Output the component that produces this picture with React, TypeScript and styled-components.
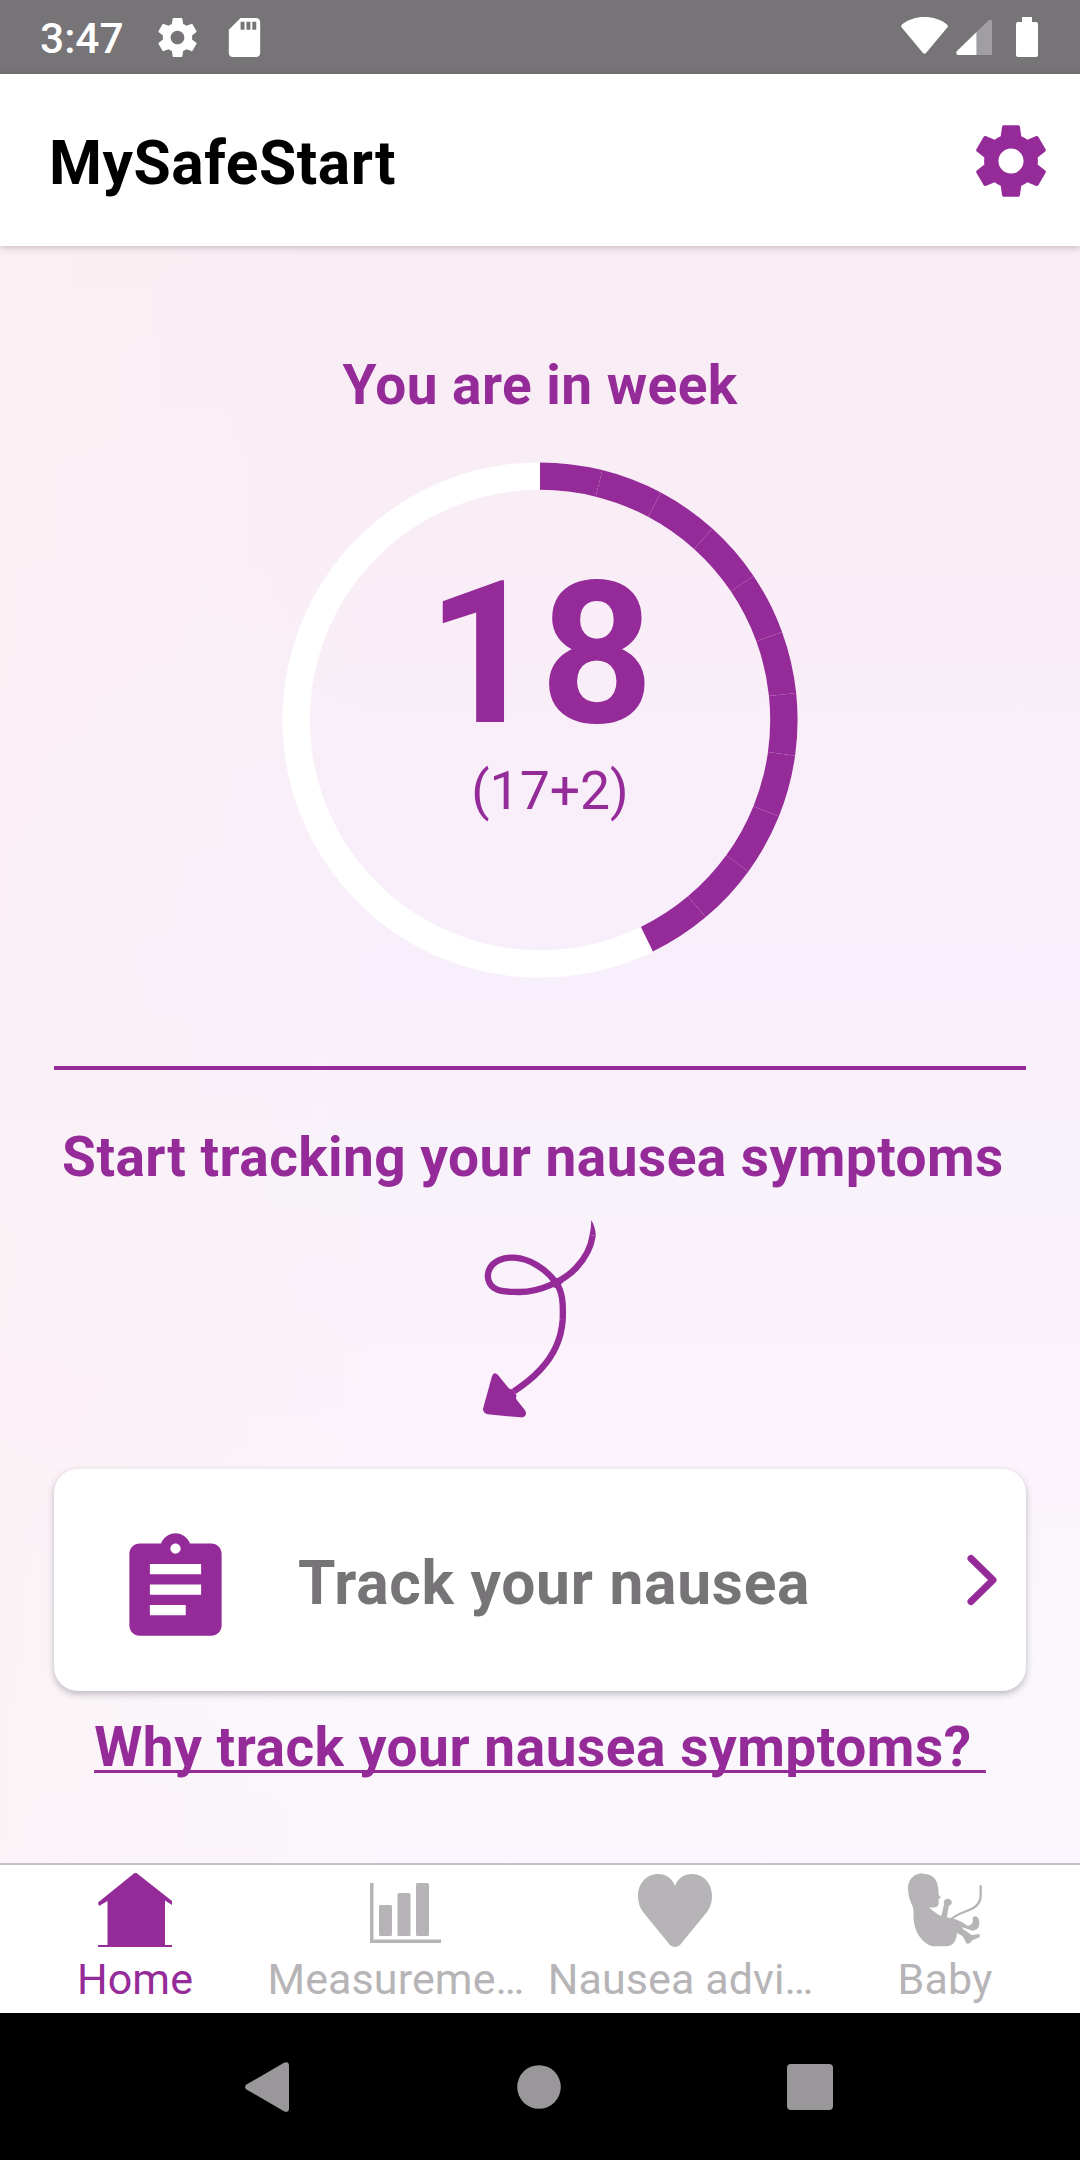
import React from "react";
import styled, { createGlobalStyle } from "styled-components";

const purple = "#952b98";
const grey = "#b6b4b7";

const GlobalStyle = createGlobalStyle`
  * { box-sizing: border-box; }
  body { margin: 0; font-family: Roboto, "Liberation Sans", sans-serif; }
  svg { display: block; flex: none; }
`;

const Screen = styled.div`
  width: 1080px;
  height: 2160px;
  display: flex;
  flex-direction: column;
  overflow: hidden;
  background: #fff;
`;

const StatusBar = styled.header`
  height: 74px;
  flex: none;
  display: flex;
  align-items: flex-start;
  justify-content: space-between;
  padding: 0 42px 0 40px;
  background: #777478;
  color: #fff;
`;

const StatusGroup = styled.div`
  display: flex;
  align-items: flex-start;
`;

const Clock = styled.span`
  width: 114px;
  font-size: 42.5px;
  line-height: 50px;
  padding-top: 14px;
  font-weight: 500;
  white-space: nowrap;
`;

const StatusIcon = styled.svg<{ $top: number; $left: number }>`
  margin-top: ${(p) => p.$top}px;
  margin-left: ${(p) => p.$left}px;
`;

const AppBar = styled.div`
  height: 172px;
  flex: none;
  display: flex;
  align-items: center;
  justify-content: space-between;
  padding: 2px 26px 0 49px;
  background: #fff;
  box-shadow: 0 1px 7px rgba(60, 40, 60, 0.3);
  z-index: 1;
`;

const Title = styled.h1`
  margin: 0;
  padding-top: 5px;
  font-size: 60.5px;
  line-height: 72px;
  font-weight: 700;
  letter-spacing: 0.55px;
  color: #000;
`;

const Content = styled.main`
  flex: 1;
  min-height: 0;
  display: flex;
  flex-direction: column;
  align-items: center;
  padding: 107px 54px 0;
  background:
    linear-gradient(90deg, rgba(251, 241, 243, 0.6) 0%, rgba(251, 241, 243, 0) 35%),
    linear-gradient(180deg, #f8edf3 0%, #f9eef7 22%, #f8effc 45%, #f8f2fa 57%, #fcf2fc 72%, #faf8fc 88%, #fbf6fd 100%);
`;

const Heading = styled.h2<{ $gap?: number }>`
  margin: ${(p) => p.$gap ?? 0}px 0 0;
  font-size: 55px;
  line-height: 64px;
  font-weight: 700;
  letter-spacing: 0.45px;
  color: ${purple};
  white-space: pre;
`;

const Ring = styled.section`
  width: 516px;
  height: 516px;
  margin-top: 45px;
  display: grid;
  flex: none;
  > * { grid-area: 1 / 1; }
`;

const RingLabel = styled.div`
  display: flex;
  flex-direction: column;
  align-items: center;
  padding-top: 92px;
  color: ${purple};
`;

const WeekNumber = styled.strong`
  font-size: 198px;
  line-height: 200px;
  font-weight: 700;
`;

const WeekDetail = styled.span`
  margin: 5px 0 0 20px;
  font-size: 53.5px;
  line-height: 64px;
`;

const Divider = styled.hr`
  width: 100%;
  height: 4px;
  flex: none;
  margin: 88px 0 0;
  border: 0;
  background: ${purple};
`;

const Squiggle = styled.svg`
  margin-top: 27px;
`;

const TrackCard = styled.button`
  width: 972px;
  height: 222px;
  flex: none;
  margin-top: 46px;
  padding: 0 29px 0 60px;
  display: flex;
  align-items: center;
  border: 0;
  border-radius: 24px;
  background: #fff;
  box-shadow: 0 3px 7px rgba(50, 40, 60, 0.3);
  font-family: inherit;
`;

const ClipboardIcon = styled.svg`
  margin-top: 18px;
`;

const CardText = styled.span`
  flex: 1;
  margin-left: 61px;
  padding-top: 7px;
  text-align: left;
  font-size: 60.5px;
  line-height: 72px;
  font-weight: 700;
  letter-spacing: 0.75px;
  color: #777478;
  white-space: nowrap;
`;

const WhyLink = styled.a`
  margin-top: 24px;
  font-size: 55px;
  line-height: 64px;
  font-weight: 700;
  letter-spacing: 0.53px;
  color: ${purple};
  white-space: pre;
  text-decoration: underline;
  text-decoration-skip-ink: none;
  text-decoration-thickness: 3px;
  text-underline-offset: 4px;
`;

const TabBar = styled.nav`
  height: 150px;
  flex: none;
  display: grid;
  grid-template-columns: repeat(4, 270px);
  border-top: 2px solid #c4c1c6;
  background: #fff;
`;

const Tab = styled.div<{ $active?: boolean }>`
  display: flex;
  flex-direction: column;
  align-items: center;
  padding-top: 8px;
  color: ${(p) => (p.$active ? purple : grey)};
`;

const TabLabel = styled.span<{ $shift?: number }>`
  margin-top: 7px;
  margin-left: ${(p) => p.$shift ?? 0}px;
  font-size: 43px;
  line-height: 50px;
  letter-spacing: 0.1px;
  white-space: nowrap;
`;

const SystemBar = styled.footer`
  height: 147px;
  flex: none;
  display: flex;
  align-items: center;
  justify-content: space-between;
  padding: 0 247px 0 245px;
  background: #000;
`;

const HomeButton = styled.svg`
  margin-left: 2px;
`;

const GEAR =
  "M19.43 12.98c.04-.32.07-.64.07-.98s-.03-.66-.07-.98l2.11-1.65c.19-.15.24-.42.12-.64l-2-3.46c-.12-.22-.39-.3-.61-.22l-2.49 1c-.52-.4-1.08-.73-1.69-.98l-.38-2.65C14.46 2.18 14.25 2 14 2h-4c-.25 0-.46.18-.49.42l-.38 2.65c-.61.25-1.17.59-1.69.98l-2.49-1c-.23-.09-.49 0-.61.22l-2 3.46c-.13.22-.07.49.12.64l2.11 1.65c-.04.32-.07.65-.07.98s.03.66.07.98l-2.11 1.65c-.19.15-.24.42-.12.64l2 3.46c.12.22.39.3.61.22l2.49-1c.52.4 1.08.73 1.69.98l.38 2.65c.03.24.24.42.49.42h4c.25 0 .46-.18.49-.42l.38-2.65c.61-.25 1.17-.59 1.69-.98l2.49 1c.23.09.49 0 .61-.22l2-3.46c.12-.22.07-.49-.12-.64l-2.11-1.65zM12 15.5c-1.93 0-3.5-1.57-3.5-3.5s1.57-3.5 3.5-3.5 3.5 1.57 3.5 3.5-1.57 3.5-3.5 3.5z";

const WEEK_ARC = 14;
const ARC_COUNT = 11;

function arcPoint(angle: number, radius: number) {
  const rad = (angle * Math.PI) / 180;
  return `${(258 + radius * Math.sin(rad)).toFixed(2)} ${(258 - radius * Math.cos(rad)).toFixed(2)}`;
}

function ProgressRing() {
  const outer = 257.6;
  const inner = 230.2;
  return (
    <svg width="516" height="516" viewBox="0 0 516 516">
      <circle cx="258" cy="258" r={(outer + inner) / 2} fill="none" stroke="#fff" strokeWidth={outer - inner} />
      {Array.from({ length: ARC_COUNT }, (_, i) => {
        const from = i * WEEK_ARC;
        const to = from + WEEK_ARC;
        return (
          <path
            key={i}
            fill={purple}
            d={`M${arcPoint(from, outer)} A${outer} ${outer} 0 0 1 ${arcPoint(to, outer)} L${arcPoint(to, inner)} A${inner} ${inner} 0 0 0 ${arcPoint(from, inner)}Z`}
          />
        );
      })}
    </svg>
  );
}

function HomeIcon() {
  return (
    <svg width="74" height="74" viewBox="0 0 74 74" fill="currentColor">
      <path d="M36.500 0h2L74 28v4l-7-4.500V72h7v3H0v-3h9.500V28L1 33 0 29.500z" />
    </svg>
  );
}

function ChartIcon() {
  return (
    <svg width="74" height="74" viewBox="0 0 74 74" fill="currentColor">
      <path d="M2 10h3.500v56.500H73V70H2z" />
      <rect x="11" y="32" width="13" height="31" rx="1.500" />
      <rect x="29.500" y="20" width="13" height="43" rx="1.500" />
      <rect x="48" y="10" width="13" height="53" rx="1.500" />
    </svg>
  );
}

function HeartIcon() {
  return (
    <svg width="74" height="74" viewBox="0 0 74 74" fill="currentColor">
      <path d="M37 13C34 5 28 1 20 1 8 1 0 11 0 23c0 6 1.500 11 5 16l27 33q2 2 5 2t5-2l27-33c3.500-5 5-10 5-16C74 11 66 1 54 1 46 1 40 5 37 13z" />
    </svg>
  );
}

function BabyIcon() {
  return (
    <svg width="74" height="74" viewBox="144 54 222 220" fill="currentColor">
      <path d="M190 54c-28 0-46 18-46 45 0 22 6 38 15 57 3 15 0 30 3 46 6 35 26 60 54 71h46c18-3 27-15 29-40l17 10 12 22 10-1 7-9 22-9v-10l-24 3-25-17-6-7 34 11c14-1 20-10 20-22 0-12-4-21-13-21-7 1-8 6-6 17-5 8-10 11-16 11-20-13-35-22-58-24l-5-1c4-12 3-25 7-35 6-1 10-6 8-13-3-7-8-8-14-8-8 2-11 9-9 17-3 15-5 26-9 35-12-6-27-16-36-26 15 2 30 2 29-15v-11l7-3-7-9c0-30-5-63-49-63z" />
      <path d="M362 90v28c0 28-16 39-42 49-22 8-36 14-46 25" fill="none" stroke="currentColor" strokeWidth="7" />
    </svg>
  );
}

export default function App() {
  return (
    <>
      <GlobalStyle />
      <Screen>
        <StatusBar>
          <StatusGroup>
            <Clock>3:47</Clock>
            <StatusIcon $top={14} $left={0} width="47" height="47" viewBox="0 0 24 24" fill="#fff">
              <path d={GEAR} />
            </StatusIcon>
            <StatusIcon $top={14} $left={20} width="47" height="47" viewBox="0 0 24 24" fill="#fff">
              <path d="M18 2h-8L4 8v12c0 1.100.9 2 2 2h12c1.100 0 2-.9 2-2V4c0-1.100-.9-2-2-2zm-6 6h-2V4h2v4zm3 0h-2V4h2v4zm3 0h-2V4h2v4z" />
            </StatusIcon>
          </StatusGroup>
          <StatusGroup>
            <StatusIcon $top={17} $left={0} width="47" height="37" viewBox="0 0 47 37" fill="#fff">
              <path d="M1 7.500C7 2.500 15 0 23.500 0S40 2.500 46 7.500q1.500 1.500.3 3L25 36q-1.500 1.500-3 0L.7 10.500Q-.5 9 1 7.500z" />
            </StatusIcon>
            <StatusIcon $top={20} $left={8} width="36" height="35" viewBox="0 0 36 35" fill="#fff">
              <path d="M36 0v35H20.500V12L32 1q1-1 2-1z" opacity="0.3" />
              <path d="M20.500 12v23H2q-3-1-1-4z" />
            </StatusIcon>
            <StatusIcon $top={17} $left={24} width="22" height="40" viewBox="0 0 22 40" fill="#fff">
              <path d="M6 0h10v5h4q2 0 2 2v31q0 2-2 2H2q-2 0-2-2V7q0-2 2-2h4z" />
            </StatusIcon>
          </StatusGroup>
        </StatusBar>

        <AppBar>
          <Title>MySafeStart</Title>
          <svg width="86" height="86" viewBox="0 0 24 24" fill={purple}>
            <path d={GEAR} />
          </svg>
        </AppBar>

        <Content>
          <Heading>You are in week</Heading>
          <Ring>
            <ProgressRing />
            <RingLabel>
              <WeekNumber>18</WeekNumber>
              <WeekDetail>(17+2)</WeekDetail>
            </RingLabel>
          </Ring>
          <Divider />
          <Heading $gap={55}>{"Start tracking your nausea symptoms "}</Heading>
          <Squiggle width="120" height="207" viewBox="120 80 360 621" fill={purple}>
            <path
              d="M458 138C454 170 436 206 408 236C372 274 300 309 236 308C208 307 186 309 168 299C146 288 138 263 148 240C160 215 190 203 222 205C270 208 316 237 348 280C368 308 370 342 368 392C364 450 340 500 300 542C278 566 252 586 222 606"
              fill="none"
              stroke={purple}
              strokeWidth="19"
            />
            <path d="M454 92q13 24 13.500 47l-19-2q5-20 5.500-45z" />
            <path d="M338 262q12 6 22 5l10 12q-10 5-9 20l-18-4q-4-6-16-8z" />
            <path d="M164 552q6 0 10 5l31 38q6 6 13 4l12 20q-4 6 0 12l25 32q6 9 0 17-4 5-14 4l-98-9q-14-4-14-17l27-97q3-9 8-9z" />
          </Squiggle>
          <TrackCard>
            <ClipboardIcon width="123" height="123" viewBox="0 0 24 24" fill={purple}>
              <path d="M19 3h-4.180C14.400 1.840 13.300 1 12 1c-1.300 0-2.400.84-2.820 2H5c-1.100 0-2 .9-2 2v14c0 1.100.9 2 2 2h14c1.100 0 2-.9 2-2V5c0-1.100-.9-2-2-2zm-7 0c.55 0 1 .45 1 1s-.45 1-1 1-1-.45-1-1 .45-1 1-1zm2 14H7v-2h7v2zm3-4H7v-2h10v2zm0-4H7V7h10v2z" />
            </ClipboardIcon>
            <CardText>Track your nausea</CardText>
            <svg width="31" height="52" viewBox="0 0 31 52">
              <path d="M5 4.500 27 26 5 47.500" fill="none" stroke={purple} strokeWidth="7" strokeLinecap="round" strokeLinejoin="round" />
            </svg>
          </TrackCard>
          <WhyLink>{"Why track your nausea symptoms? "}</WhyLink>
        </Content>

        <TabBar>
          <Tab $active>
            <HomeIcon />
            <TabLabel>Home</TabLabel>
          </Tab>
          <Tab>
            <ChartIcon />
            <TabLabel $shift={-18}>Measureme…</TabLabel>
          </Tab>
          <Tab>
            <HeartIcon />
            <TabLabel $shift={11}>Nausea advi…</TabLabel>
          </Tab>
          <Tab>
            <BabyIcon />
            <TabLabel>Baby</TabLabel>
          </Tab>
        </TabBar>

        <SystemBar>
          <svg width="44" height="50" viewBox="0 0 44 50" fill="#9a979b">
            <path d="M39 .8q5-2 5 3v42.400q0 5-5 3L1.500 27.500q-3-2.500 0-5z" />
          </svg>
          <HomeButton width="44" height="44" viewBox="0 0 44 44" fill="#9a979b">
            <circle cx="22" cy="22" r="21.800" />
          </HomeButton>
          <svg width="46" height="46" viewBox="0 0 46 46" fill="#9a979b">
            <rect width="46" height="46" rx="4" />
          </svg>
        </SystemBar>
      </Screen>
    </>
  );
}
